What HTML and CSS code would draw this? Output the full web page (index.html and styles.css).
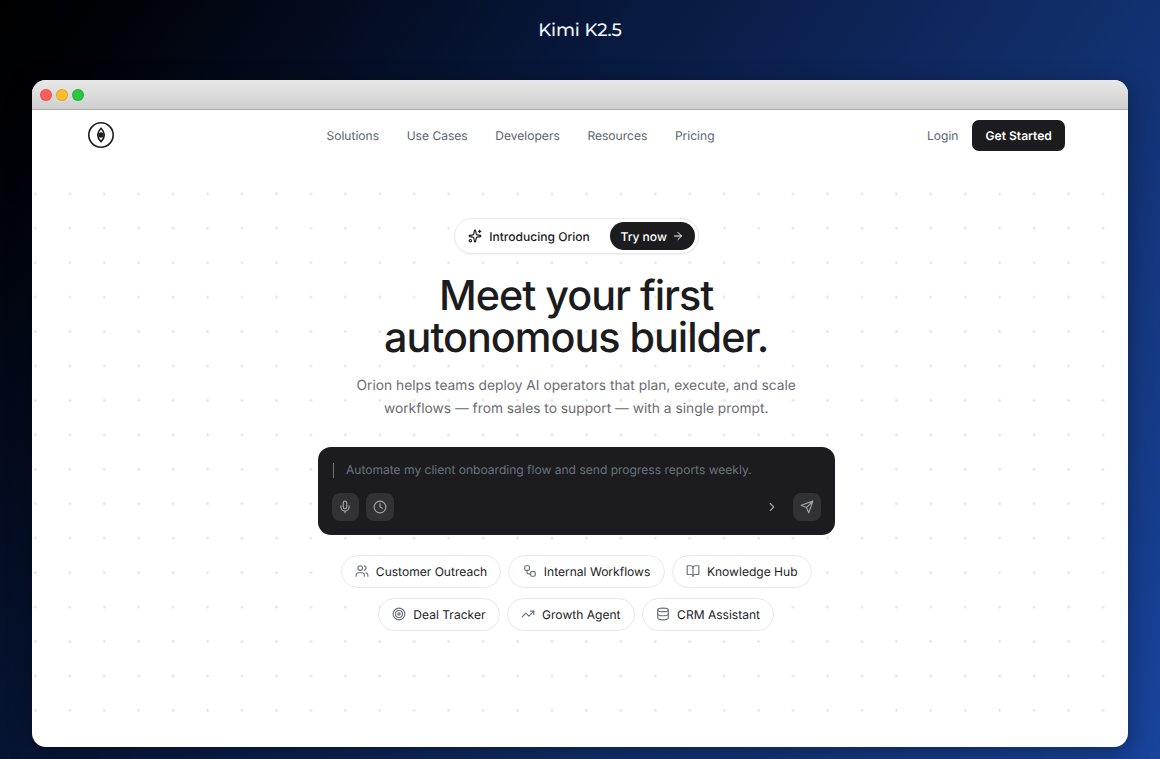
FILE: index.html
```html
<!DOCTYPE html>
<html lang="en">
  <head>
    <title>Kimi K2.5</title>
    <meta charset="utf-8" />
    <link rel="stylesheet" href="styles.css">
  </head>
  <body>
    <div class="caption">Kimi K2.5</div>
    <div class="window">
      <div class="titlebar">
        <span class="light red"></span>
        <span class="light yellow"></span>
        <span class="light green"></span>
      </div>
      <div class="page">
        <header class="header">
          <svg class="logo" viewBox="0 0 26 26">
            <circle cx="13" cy="13" r="12.2" />
            <path d="M13 6.3c4.2 4.3 4.2 9.1 0 13.4c-4.2-4.3-4.2-9.1 0-13.4z" />
            <circle class="pupil" cx="13" cy="13" r="1.9" />
          </svg>
          <nav class="nav">
            <a>Solutions</a>
            <a>Use Cases</a>
            <a>Developers</a>
            <a>Resources</a>
            <a>Pricing</a>
          </nav>
          <div class="account">
            <a>Login</a>
            <button class="start">Get Started</button>
          </div>
        </header>

        <main class="hero">
          <div class="intro">
            <svg class="icon" viewBox="0 0 24 24">
              <path d="M11.017 2.814a1 1 0 0 1 1.966 0l1.051 5.558a2 2 0 0 0 1.594 1.594l5.558 1.051a1 1 0 0 1 0 1.966l-5.558 1.051a2 2 0 0 0-1.594 1.594l-1.051 5.558a1 1 0 0 1-1.966 0l-1.051-5.558a2 2 0 0 0-1.594-1.594l-5.558-1.051a1 1 0 0 1 0-1.966l5.558-1.051a2 2 0 0 0 1.594-1.594z" />
              <path d="M20 2v4M22 4h-4" />
              <circle cx="4" cy="20" r="2" />
            </svg>
            <span>Introducing Orion</span>
            <button class="try">
              Try now
              <svg class="icon" viewBox="0 0 24 24"><path d="M5 12h14M12 5l7 7-7 7" /></svg>
            </button>
          </div>

          <h1>Meet your first<br />autonomous builder.</h1>
          <p class="lead">
            Orion helps teams deploy AI operators that plan, execute, and scale<br />
            workflows — from sales to support — with a single prompt.
          </p>

          <div class="prompt">
            <div class="prompt-text">
              <span class="cursor"></span>
              <span>Automate my client onboarding flow and send progress reports weekly.</span>
            </div>
            <div class="tools">
              <button class="tool">
                <svg class="icon" viewBox="0 0 24 24">
                  <path d="M12 19v3M19 10v2a7 7 0 0 1-14 0v-2" />
                  <rect x="9" y="2" width="6" height="13" rx="3" />
                </svg>
              </button>
              <button class="tool">
                <svg class="icon" viewBox="0 0 24 24">
                  <circle cx="12" cy="12" r="10" />
                  <path d="M12 6v6l4 2" />
                </svg>
              </button>
              <svg class="icon chevron" viewBox="0 0 24 24"><path d="M9 18l6-6-6-6" /></svg>
              <button class="tool">
                <svg class="icon" viewBox="0 0 24 24">
                  <path d="M22 2l-7 20-4-9-9-4zM22 2L11 13" />
                </svg>
              </button>
            </div>
          </div>

          <div class="chips">
            <div class="chip">
              <svg class="icon" viewBox="0 0 24 24">
                <path d="M16 21v-2a4 4 0 0 0-4-4H6a4 4 0 0 0-4 4v2" />
                <circle cx="9" cy="7" r="4" />
                <path d="M22 21v-2a4 4 0 0 0-3-3.87M16 3.13a4 4 0 0 1 0 7.75" />
              </svg>
              Customer Outreach
            </div>
            <div class="chip">
              <svg class="icon" viewBox="0 0 24 24">
                <rect x="3" y="3" width="8" height="8" rx="2" />
                <path d="M7 11v4a2 2 0 0 0 2 2h4" />
                <rect x="13" y="13" width="8" height="8" rx="2" />
              </svg>
              Internal Workflows
            </div>
            <div class="chip">
              <svg class="icon" viewBox="0 0 24 24">
                <path d="M12 7v14" />
                <path d="M3 18a1 1 0 0 1-1-1V4a1 1 0 0 1 1-1h5a4 4 0 0 1 4 4 4 4 0 0 1 4-4h5a1 1 0 0 1 1 1v13a1 1 0 0 1-1 1h-6a3 3 0 0 0-3 3 3 3 0 0 0-3-3z" />
              </svg>
              Knowledge Hub
            </div>
          </div>
          <div class="chips">
            <div class="chip">
              <svg class="icon" viewBox="0 0 24 24">
                <circle cx="12" cy="12" r="10" />
                <circle cx="12" cy="12" r="6" />
                <circle cx="12" cy="12" r="2" />
              </svg>
              Deal Tracker
            </div>
            <div class="chip">
              <svg class="icon" viewBox="0 0 24 24">
                <path d="M22 7l-8.5 8.5-5-5L2 17" />
                <path d="M16 7h6v6" />
              </svg>
              Growth Agent
            </div>
            <div class="chip">
              <svg class="icon" viewBox="0 0 24 24">
                <ellipse cx="12" cy="5" rx="9" ry="3" />
                <path d="M3 5v14a9 3 0 0 0 18 0V5" />
                <path d="M3 12a9 3 0 0 0 18 0" />
              </svg>
              CRM Assistant
            </div>
          </div>
        </main>
      </div>
    </div>
  </body>
</html>
```

FILE: styles.css
```css
* {
  box-sizing: border-box;
}
body {
  margin: 0;
  height: 759px;
  padding: 0 32px;
  overflow: hidden;
  font-family: Inter, sans-serif;
  text-rendering: geometricPrecision;
  background: linear-gradient(125deg, #000 0%, #000208 8%, #08193f 38%, #12306f 68%, #18449c 100%);
}
.caption {
  height: 80px;
  line-height: 60px;
  text-align: center;
  font-family: Montserrat, sans-serif;
  font-size: 18px;
  font-weight: 500;
  letter-spacing: -0.15px;
  color: #f4f6fa;
}
.window {
  height: 667px;
  border-radius: 14px;
  overflow: hidden;
  background: #fff;
  box-shadow: 0 6px 24px rgba(0, 0, 0, 0.35);
}
.titlebar {
  display: flex;
  align-items: center;
  gap: 4px;
  height: 30px;
  padding-left: 8px;
  background: linear-gradient(#e8e8e8, #cfcfcf);
  border-bottom: 1px solid #acacac;
}
.light {
  width: 12px;
  height: 12px;
  border-radius: 50%;
  border: 1px solid rgba(0, 0, 0, 0.12);
}
.red {
  background: #ff5f57;
}
.yellow {
  background: #ffbd2e;
}
.green {
  background: #28c940;
}

.page {
  padding-right: 7px;
}
.header {
  display: flex;
  justify-content: space-between;
  align-items: center;
  height: 51px;
  padding: 0 55.6px 0 56px;
  font-size: 12.06px;
  color: #5a636f;
}
.logo {
  width: 26px;
  height: 26px;
  margin-bottom: 1px;
  fill: none;
  stroke: #1c1c1e;
  stroke-width: 1.6;
}
.logo .pupil {
  fill: #1c1c1e;
}
.nav {
  display: flex;
  gap: 27.6px;
}
.account {
  display: flex;
  align-items: center;
  gap: 13.5px;
}
button {
  border: none;
  padding: 0;
  font-family: inherit;
  text-rendering: inherit;
  color: #fff;
  background: #1c1c1e;
}
.start {
  width: 93.4px;
  height: 31px;
  border-radius: 7px;
  font-size: 12.06px;
  font-weight: 600;
}

.icon {
  width: 14px;
  height: 14px;
  flex: none;
  fill: none;
  stroke: currentColor;
  stroke-width: 2;
  stroke-linecap: round;
  stroke-linejoin: round;
}
.hero {
  display: flex;
  flex-direction: column;
  align-items: center;
  height: 575px;
  padding-top: 57px;
  margin-right: -7px;
  padding-right: 7.6px;
  background: radial-gradient(circle, #e6e6e9 1px, transparent 1.6px) -13.8px 15.6px / 34.45px 34.45px;
}
.intro {
  display: flex;
  align-items: center;
  gap: 7px;
  width: 245px;
  height: 36px;
  padding: 0 3px 0 13.5px;
  border: 1px solid #e8e8ea;
  border-radius: 18px;
  background: #fff;
  box-shadow: 0 1px 2px rgba(0, 0, 0, 0.05);
  font-size: 12.06px;
  font-weight: 500;
  color: #1c1c1e;
}
.try {
  display: flex;
  align-items: center;
  justify-content: center;
  gap: 5px;
  width: 85px;
  height: 28px;
  margin-left: auto;
  border-radius: 14px;
  font-size: 12.06px;
  font-weight: 500;
}
.try .icon {
  width: 12px;
  height: 12px;
}
h1 {
  margin: 21.4px 0 0;
  text-align: center;
  font-size: 41.35px;
  line-height: 41.35px;
  font-weight: 500;
  letter-spacing: -1.03px;
  color: #1c1c1e;
}
.lead {
  margin: 17.4px 0 0;
  text-align: center;
  font-size: 13.78px;
  line-height: 23px;
  color: #6b6b6f;
}
.prompt {
  width: 517px;
  height: 88px;
  margin: 25.2px 0 20.3px;
  padding: 14px;
  border-radius: 13px;
  background: #1c1c1e;
}
.prompt-text {
  display: flex;
  align-items: center;
  gap: 12.3px;
  height: 18px;
  font-size: 12.06px;
  color: #6b7280;
}
.cursor {
  width: 1px;
  height: 15px;
  margin: 2px 0 0 1px;
  background: #6b7280;
}
.tools {
  display: flex;
  align-items: center;
  gap: 7px;
  margin-top: 14.5px;
  color: #a0a3aa;
}
.tool {
  display: flex;
  align-items: center;
  justify-content: center;
  width: 27.5px;
  height: 27.5px;
  border-radius: 8px;
  color: inherit;
  background: #323235;
}
.chevron {
  margin: 0 7px 0 auto;
}
.chips {
  display: flex;
  gap: 7px;
  margin-bottom: 10px;
}
.chip {
  display: flex;
  align-items: center;
  gap: 7px;
  height: 33px;
  padding: 0 13.3px;
  border: 1px solid #e8e8ea;
  border-radius: 17px;
  background: #fff;
  font-size: 12.06px;
  color: #1c1c1e;
}
.chip .icon {
  color: #6b7280;
}
```
